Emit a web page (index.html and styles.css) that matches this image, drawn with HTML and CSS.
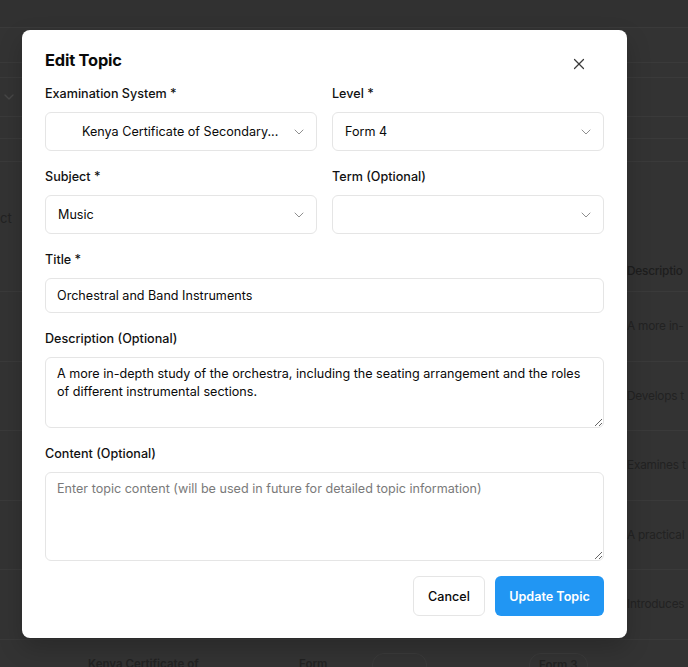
FILE: index.html
```html
<!DOCTYPE html>
<html lang="en">
<head>
<meta charset="utf-8">
<title>Edit Topic</title>
<link rel="stylesheet" href="styles.css">
</head>
<body>
<div class="page">
  <div class="bar bar-top"></div>
  <div class="bar bar-a"></div>
  <div class="bar bar-b"></div>
  <div class="bar bar-filter">
    <svg class="bg-chev" viewBox="0 0 24 24" width="16" height="16"><path d="m6 9 6 6 6-6"/></svg>
  </div>
  <div class="bar bar-c"></div>
  <div class="bar bar-d"></div>
  <div class="section">
    <span class="cut-text">ct</span>
    <div class="thead"><span class="col-desc">Descriptio</span></div>
  </div>
  <div class="trow"><span class="col-desc">A more in-</span></div>
  <div class="trow"><span class="col-desc">Develops t</span></div>
  <div class="trow"><span class="col-desc">Examines t</span></div>
  <div class="trow"><span class="col-desc">A practical</span></div>
  <div class="trow"><span class="col-desc">Introduces</span></div>
  <div class="trow trow-last">
    <span class="c-system">Kenya Certificate of</span>
    <span class="c-form">Form</span>
    <span class="c-pill c-pill-empty"></span>
    <span class="c-pill">Form 3</span>
  </div>
</div>

<div class="modal" role="dialog" aria-labelledby="dlg-title">
  <div class="modal-header">
    <h2 id="dlg-title" class="modal-title">Edit Topic</h2>
  </div>
  <button class="close-btn" aria-label="Close">
    <svg viewBox="0 0 24 24" width="18" height="18"><path d="M18 6 6 18"/><path d="m6 6 12 12"/></svg>
  </button>

  <form class="form">
    <div class="row-2">
      <div class="field">
        <label class="label">Examination System *</label>
        <div class="select select-h1 select-indent">
          <span class="select-value">Kenya Certificate of Secondary...</span>
          <svg class="chev" viewBox="0 0 24 24" width="16" height="16"><path d="m6 9 6 6 6-6"/></svg>
        </div>
      </div>
      <div class="field">
        <label class="label">Level *</label>
        <div class="select select-h1">
          <span class="select-value">Form 4</span>
          <svg class="chev" viewBox="0 0 24 24" width="16" height="16"><path d="m6 9 6 6 6-6"/></svg>
        </div>
      </div>
    </div>

    <div class="row-2">
      <div class="field">
        <label class="label">Subject *</label>
        <div class="select select-h2">
          <span class="select-value">Music</span>
          <svg class="chev" viewBox="0 0 24 24" width="16" height="16"><path d="m6 9 6 6 6-6"/></svg>
        </div>
      </div>
      <div class="field">
        <label class="label">Term (Optional)</label>
        <div class="select select-h2">
          <span class="select-value"></span>
          <svg class="chev" viewBox="0 0 24 24" width="16" height="16"><path d="m6 9 6 6 6-6"/></svg>
        </div>
      </div>
    </div>

    <div class="field">
      <label class="label">Title *</label>
      <input class="input" type="text" value="Orchestral and Band Instruments">
    </div>

    <div class="field">
      <label class="label">Description (Optional)</label>
      <textarea class="textarea textarea-desc">A more in-depth study of the orchestra, including the seating arrangement and the roles of different instrumental sections.</textarea>
    </div>

    <div class="field">
      <label class="label">Content (Optional)</label>
      <textarea class="textarea textarea-content" placeholder="Enter topic content (will be used in future for detailed topic information)"></textarea>
    </div>

    <div class="actions">
      <button type="button" class="btn btn-outline">Cancel</button>
      <button type="button" class="btn btn-primary">Update Topic</button>
    </div>
  </form>
</div>
</body>
</html>
```

FILE: styles.css
```css
* { box-sizing: border-box; }

html, body {
  margin: 0;
  padding: 0;
  background: #333333;
  font-family: Inter, "Noto Sans", sans-serif;
  overflow: hidden;
}

/* ---------- dimmed page behind the dialog ---------- */
.page {
  width: 688px;
  height: 667px;
  overflow: hidden;
  color: #1d1d1d;
  font-size: 12.6px;
}

.bar { border-bottom: 1px solid #3a3a3a; }
.bar-top { height: 28px; background: #313131; }
.bar-a { height: 35px; }
.bar-b { height: 15px; }
.bar-filter {
  height: 39px;
  display: flex;
  align-items: center;
  padding-left: 1px;
}
.bg-chev {
  fill: none;
  stroke: #474747;
  stroke-width: 2;
  stroke-linecap: round;
  stroke-linejoin: round;
}
.bar-c { height: 22px; }
.bar-d { height: 23px; }

.section {
  height: 130px;
  border-bottom: 1px solid #3a3a3a;
  display: flex;
  flex-direction: column;
}
.cut-text {
  margin-top: 47px;
  height: 18px;
  line-height: 18px;
  color: #222;
  font-size: 13px;
}
.thead {
  margin-top: 35px;
  height: 18px;
  line-height: 18px;
  font-weight: 500;
}
.col-desc {
  display: block;
  padding-left: 627px;
  white-space: nowrap;
  font-size: 11.8px;
  letter-spacing: -0.2px;
}
.trow {
  height: 69.5px;
  border-bottom: 1px solid #3a3a3a;
  display: flex;
  align-items: center;
  color: #222;
}
.trow-last {
  border-bottom: 0;
  align-items: flex-start;
  padding-top: 17px;
  font-weight: 600;
  font-size: 11.5px;
}
.c-system { margin-left: 88px; width: 211px; white-space: nowrap; }
.c-form { width: 73px; }
.c-pill {
  display: inline-block;
  border: 1px solid #3a3a3a;
  border-radius: 12px;
  height: 24px;
  margin-top: -4px;
  padding: 3px 9px;
  line-height: 16px;
}
.c-pill-empty { width: 55px; margin-right: 102px; }

/* ---------- dialog ---------- */
.modal {
  position: absolute;
  left: 22px;
  top: 30px;
  width: 605px;
  padding: 16px 23px 22px;
  background: #ffffff;
  border-radius: 8px;
  box-shadow: 0 10px 25px rgba(0, 0, 0, 0.2);
  color: #0a0a0a;
}

.modal-header {
  height: 28px;
  margin-bottom: 11px;
  display: flex;
  align-items: center;
}
.modal-title {
  margin: 0;
  font-size: 16.4px;
  line-height: 28px;
  font-weight: 700;
  letter-spacing: -0.2px;
  color: #0a0a0a;
}

.close-btn {
  position: absolute;
  top: 25px;
  right: 39px;
  width: 18px;
  height: 18px;
  padding: 0;
  border: 0;
  background: transparent;
  color: #3a3a3a;
  display: flex;
}
.close-btn svg {
  fill: none;
  stroke: currentColor;
  stroke-width: 1.6;
  stroke-linecap: round;
  stroke-linejoin: round;
}

.form {
  display: flex;
  flex-direction: column;
  gap: 17px;
}

.row-2 {
  display: grid;
  grid-template-columns: minmax(0, 1fr) minmax(0, 1fr);
  column-gap: 15px;
}

.field {
  display: flex;
  flex-direction: column;
  gap: 9px;
  min-width: 0;
}

.label {
  font-size: 12.6px;
  line-height: 18px;
  font-weight: 500;
  color: #111;
}

.select {
  display: flex;
  align-items: center;
  justify-content: space-between;
  border: 1px solid #e5e5e5;
  border-radius: 6px;
  padding: 0 9px 0 12px;
  font-size: 12.6px;
  color: #0a0a0a;
  background: #fff;
  min-width: 0;
}
.select-h1 { height: 39px; }
.select-h2 { height: 39px; }
.select-indent { padding-left: 36px; }
.select-value {
  white-space: nowrap;
  overflow: hidden;
}
.chev {
  flex: none;
  fill: none;
  stroke: #0a0a0a;
  opacity: 0.45;
  stroke-width: 1.5;
  stroke-linecap: round;
  stroke-linejoin: round;
}

.input {
  height: 35px;
  border: 1px solid #e5e5e5;
  border-radius: 6px;
  padding: 0 11px;
  font: 12.6px Inter, "Noto Sans", sans-serif;
  color: #0a0a0a;
  outline: none;
}

.textarea {
  border: 1px solid #e5e5e5;
  border-radius: 6px;
  padding: 7px 11px;
  font: 12.6px/18px Inter, "Noto Sans", sans-serif;
  color: #0a0a0a;
  resize: vertical;
  outline: none;
  display: block;
  width: 100%;
}
.textarea::placeholder { color: #7a7a7a; }
.textarea-desc { height: 71px; }
.textarea-content { height: 89px; }

.actions {
  display: flex;
  justify-content: flex-end;
  gap: 10px;
  margin-top: -2px;
}

.btn {
  height: 40px;
  border-radius: 6px;
  font: 500 12.6px Inter, "Noto Sans", sans-serif;
  padding: 0;
  cursor: pointer;
}
.btn-outline {
  width: 72px;
  background: #fff;
  border: 1px solid #e5e5e5;
  color: #0a0a0a;
}
.btn-primary {
  width: 109px;
  background: #2196f3;
  border: 0;
  color: #ffffff;
  font-weight: 600;
}
```
